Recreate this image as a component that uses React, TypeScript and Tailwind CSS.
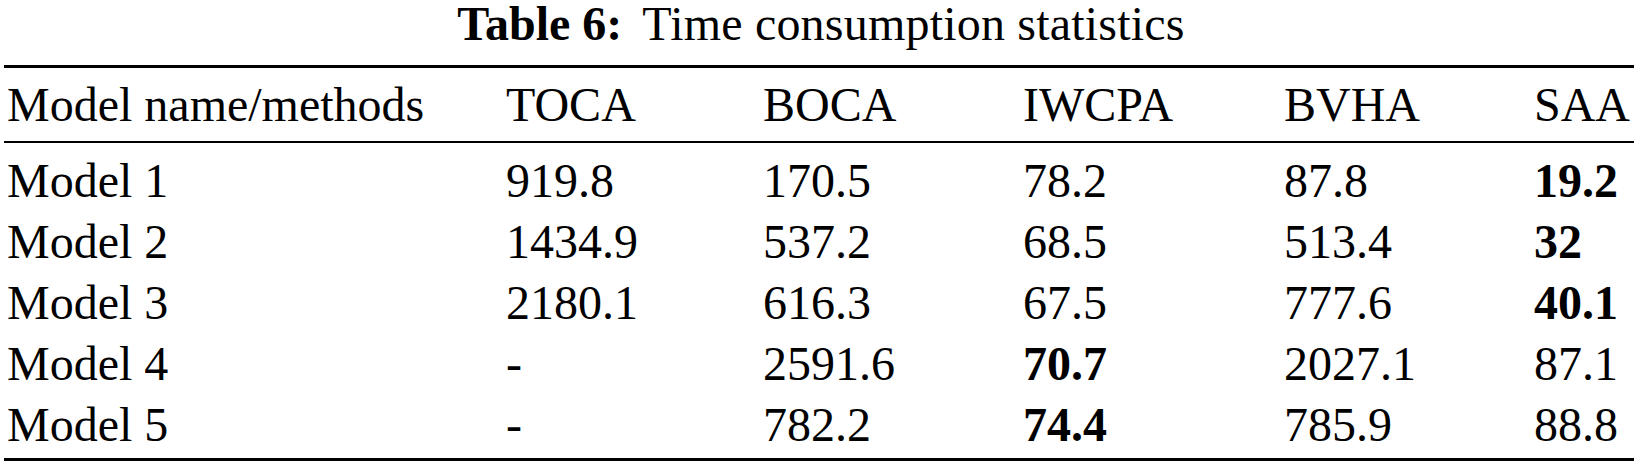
const columns = ["Model name/methods", "TOCA", "BOCA", "IWCPA", "BVHA", "SAA"];

type Cell = { v: string; bold?: boolean };

const rows: Cell[][] = [
  [{ v: "Model 1" }, { v: "919.8" }, { v: "170.5" }, { v: "78.2" }, { v: "87.8" }, { v: "19.2", bold: true }],
  [{ v: "Model 2" }, { v: "1434.9" }, { v: "537.2" }, { v: "68.5" }, { v: "513.4" }, { v: "32", bold: true }],
  [{ v: "Model 3" }, { v: "2180.1" }, { v: "616.3" }, { v: "67.5" }, { v: "777.6" }, { v: "40.1", bold: true }],
  [{ v: "Model 4" }, { v: "-" }, { v: "2591.6" }, { v: "70.7", bold: true }, { v: "2027.1" }, { v: "87.1" }],
  [{ v: "Model 5" }, { v: "-" }, { v: "782.2" }, { v: "74.4", bold: true }, { v: "785.9" }, { v: "88.8" }],
];

const grid = "grid grid-cols-[502px_257px_260px_261px_250px_1fr]";

export default function App() {
  return (
    <div className="h-[467px] w-[1642px] bg-white [font-family:Liberation_Serif,Times_New_Roman,serif] text-[48px] text-black">
      <div className="flex h-[48px] justify-center leading-[48px]">
        <span className="font-bold">Table 6:</span>
        <span className="ml-[20px] tracking-[0.2px]">Time consumption statistics</span>
      </div>
      <div className="ml-[4px] mt-[17px] w-[1630px]">
        <div className="h-[3px] bg-black" />
        <div className={`${grid} mt-[6px] leading-[61px]`}>
          {columns.map((c, i) => (
            <div key={c} className={i === 0 ? "pl-[3px]" : ""}>
              {c}
            </div>
          ))}
        </div>
        <div className="mt-[6px] h-[2px] bg-black" />
        <div className="mt-[7px] flex flex-col">
          {rows.map((r) => (
            <div key={r[0].v} className={`${grid} leading-[61px]`}>
              {r.map((cell, i) => (
                <div key={i} className={`${i === 0 ? "pl-[3px]" : ""} ${cell.bold ? "font-bold" : ""}`}>
                  {cell.v}
                </div>
              ))}
            </div>
          ))}
        </div>
        <div className="mt-[3px] h-[3px] bg-black" />
      </div>
    </div>
  );
}
